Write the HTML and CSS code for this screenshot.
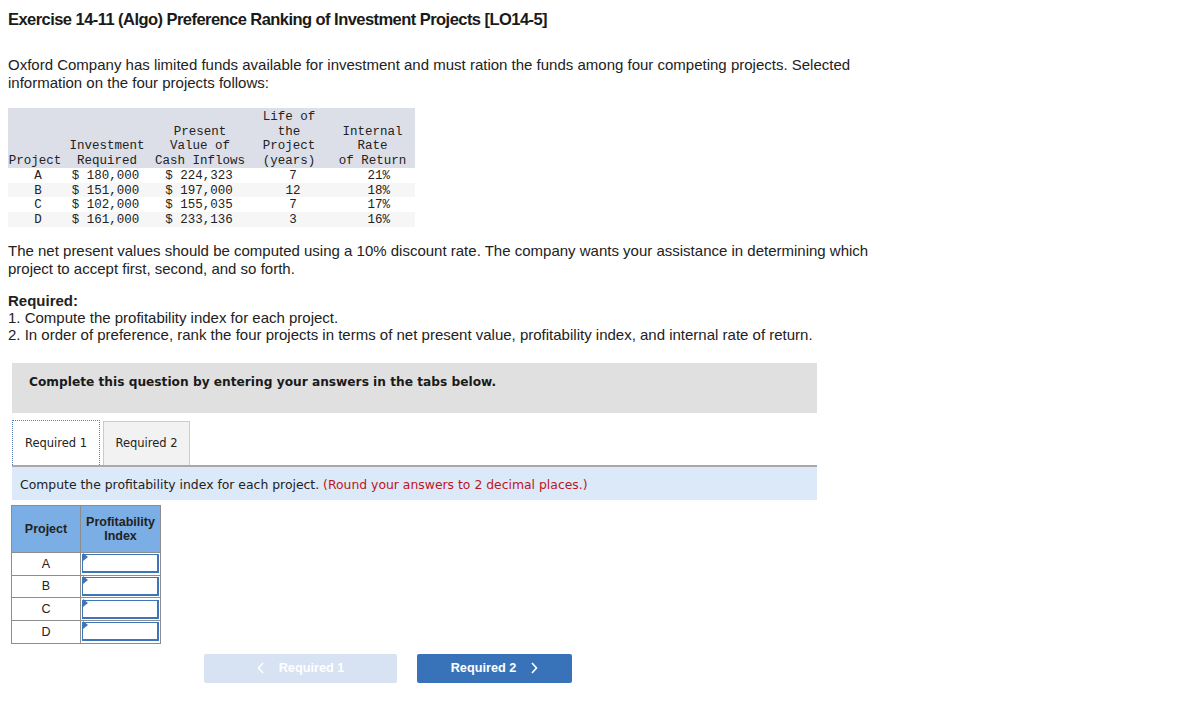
FILE: index.html
```html
<!DOCTYPE html>
<html>
<head>
<meta charset="utf-8">
<link rel="stylesheet" href="styles.css">
</head>
<body>
<h1 class="title">Exercise 14-11 (Algo) Preference Ranking of Investment Projects [LO14-5]</h1>
<p class="text intro">Oxford Company has limited funds available for investment and must ration the funds among four competing projects. Selected information on the four projects follows:</p>
<table class="data">
  <thead>
    <tr>
      <th class="c1">Project</th>
      <th class="c2">Investment<br>Required</th>
      <th class="c3">Present<br>Value of<br>Cash Inflows</th>
      <th class="c4">Life of<br>the<br>Project<br>(years)</th>
      <th class="c5">Internal<br>Rate<br>of Return</th>
    </tr>
  </thead>
  <tbody>
    <tr><td class="c1">A</td><td class="c2">$ 180,000</td><td class="c3">$ 224,323</td><td class="c4">7</td><td class="c5">21%</td></tr>
    <tr class="alt"><td class="c1">B</td><td class="c2">$ 151,000</td><td class="c3">$ 197,000</td><td class="c4">12</td><td class="c5">18%</td></tr>
    <tr><td class="c1">C</td><td class="c2">$ 102,000</td><td class="c3">$ 155,035</td><td class="c4">7</td><td class="c5">17%</td></tr>
    <tr class="alt"><td class="c1">D</td><td class="c2">$ 161,000</td><td class="c3">$ 233,136</td><td class="c4">3</td><td class="c5">16%</td></tr>
  </tbody>
</table>
<p class="text discount">The net present values should be computed using a 10% discount rate. The company wants your assistance in determining which project to accept first, second, and so forth.</p>
<div class="text req">
  <div class="req-head">Required:</div>
  <div>1. Compute the profitability index for each project.</div>
  <div>2. In order of preference, rank the four projects in terms of net present value, profitability index, and internal rate of return.</div>
</div>
<div class="panel">
  <div class="banner">Complete this question by entering your answers in the tabs below.</div>
  <div class="tabs">
    <div class="tab active">Required 1</div>
    <div class="tab">Required 2</div>
  </div>
  <div class="instr">Compute the profitability index for each project. <span class="red">(Round your answers to 2 decimal places.)</span></div>
  <table class="answer">
    <thead>
      <tr><th class="a1">Project</th><th class="a2">Profitability<br>Index</th></tr>
    </thead>
    <tbody>
      <tr><td class="a1">A</td><td class="a2"><div class="input"></div></td></tr>
      <tr><td class="a1">B</td><td class="a2"><div class="input"></div></td></tr>
      <tr><td class="a1">C</td><td class="a2"><div class="input"></div></td></tr>
      <tr><td class="a1">D</td><td class="a2"><div class="input"></div></td></tr>
    </tbody>
  </table>
  <div class="nav">
    <div class="btn prev">
      <svg class="chev" width="8" height="12" viewBox="0 0 8 12"><polyline points="6,1 1.5,6 6,11" fill="none" stroke="#ffffff" stroke-width="1.6"/></svg>
      <span>Required 1</span>
    </div>
    <div class="btn next">
      <span>Required 2</span>
      <svg class="chev" width="8" height="12" viewBox="0 0 8 12"><polyline points="2,1 6.5,6 2,11" fill="none" stroke="#ffffff" stroke-width="1.6"/></svg>
    </div>
  </div>
</div>
</body>
</html>
```
FILE: styles.css
```css
body {
  margin: 8px;
  background: #ffffff;
  color: #222222;
  font-family: "Liberation Sans", Arial, sans-serif;
}
.title {
  margin: 0;
  font-size: 16.5px;
  line-height: 22px;
  font-weight: bold;
  color: #1a1a1a;
  letter-spacing: -0.55px;
}
.text {
  font-size: 15px;
  line-height: 18px;
  color: #222222;
}
.intro {
  margin: 26px 0 0 0;
  width: 860px;
}
.data {
  margin-top: 16px;
  border-collapse: collapse;
  font-family: "Liberation Mono", "Courier New", monospace;
  font-size: 12.5px;
  color: #222222;
}
.data th {
  background: #dcdfe8;
  font-weight: normal;
  vertical-align: bottom;
  padding: 2px 0 0 0;
  line-height: 14.5px;
  text-align: center;
  box-sizing: border-box;
}
.data td {
  padding: 3px 0 0 0;
  line-height: 11.7px;
  text-align: center;
  box-sizing: border-box;
}
.data tr.alt td {
  background: #f6f6f6;
}
.data .c1 { width: 54px; }
.data .c2 { width: 90px; }
.data .c3 { width: 96px; }
.data .c4 { width: 82px; }
.data .c5 { width: 85px; }
.data td.c1 { padding-left: 6px; }
.data td.c2 { padding-right: 3px; }
.data td.c3 { padding-right: 2px; }
.data td.c4 { padding-left: 8px; }
.data td.c5 { text-align: right; padding-right: 25px; }
.discount {
  margin: 15px 0 0 0;
  width: 880px;
}
.req {
  margin-top: 14px;
  line-height: 17px;
}
.req-head {
  font-weight: bold;
}
.panel {
  margin: 20px 0 0 4px;
  width: 805px;
  font-family: "DejaVu Sans", Verdana, sans-serif;
}
.banner {
  background: #e0e0e0;
  height: 50px;
  box-sizing: border-box;
  padding: 12px 0 0 17px;
  font-size: 12.2px;
  font-weight: bold;
  color: #1a1a1a;
}
.tabs {
  display: flex;
  margin-top: 7px;
  gap: 3px;
  align-items: flex-end;
  border-bottom: 2px solid #a9a9a9;
}
.tab {
  width: 87px;
  height: 44px;
  box-sizing: border-box;
  display: flex;
  align-items: center;
  justify-content: center;
  font-size: 11.5px;
  color: #222222;
  background: #f2f2f2;
  border: 1px solid #cccccc;
  border-bottom: none;
}
.tab.active {
  width: 88px;
  height: 45px;
  background: #ffffff;
  border: 1px dotted #5a7fb8;
  border-bottom: none;
}
.instr {
  background: #dbe9f8;
  height: 33px;
  box-sizing: border-box;
  padding: 10px 0 0 8px;
  font-size: 12.4px;
  color: #222222;
}
.red {
  color: #c0141c;
}
.answer {
  margin: 5px 0 0 -1px;
  border-collapse: collapse;
  font-family: "Liberation Sans", Arial, sans-serif;
  font-size: 12.5px;
  color: #222222;
}
.answer th {
  background: #7aaee5;
  border: 1px solid #8d8d8d;
  height: 47px;
  box-sizing: border-box;
  padding: 0;
  font-weight: bold;
  line-height: 14px;
  text-align: center;
}
.answer td {
  border: 1px solid #8d8d8d;
  height: 22.7px;
  box-sizing: border-box;
  padding: 0;
  text-align: center;
}
.answer .a1 { width: 69px; }
.answer .a2 { width: 80px; }
.answer td.a2 {
  padding: 1px;
}
.input {
  position: relative;
  height: 19px;
  box-sizing: border-box;
  border-style: solid;
  border-color: #3e74b8;
  border-width: 1.5px 2px 2px 1.5px;
  background: #ffffff;
}
.input::before {
  content: "";
  position: absolute;
  left: 0;
  top: 0;
  border-top: 4px solid transparent;
  border-bottom: 4px solid transparent;
  border-left: 5px solid #3e74b8;
  margin-top: -2px;
}
.nav {
  display: flex;
  gap: 20px;
  margin-top: 10px;
  padding-left: 192px;
}
.btn {
  height: 29px;
  display: flex;
  align-items: center;
  justify-content: center;
  gap: 14px;
  border-radius: 2px;
  font-family: "Liberation Sans", Arial, sans-serif;
  font-size: 12.7px;
  font-weight: bold;
  color: #ffffff;
}
.btn.prev {
  width: 193px;
  background: #d7e3f2;
}
.btn.next {
  width: 155px;
  background: #3873b9;
}
.chev {
  display: block;
}
```
